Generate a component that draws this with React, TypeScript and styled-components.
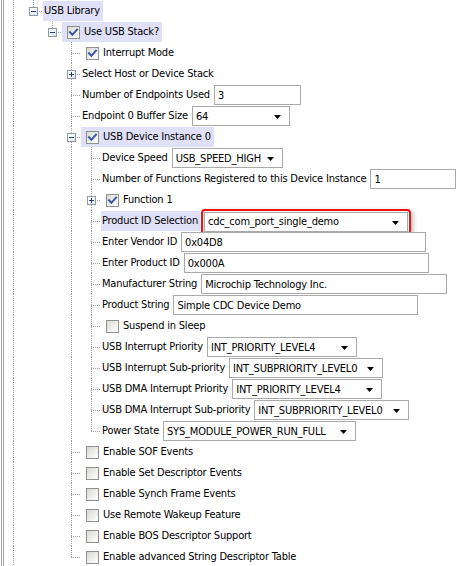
import React from 'react';
import styled, { createGlobalStyle, css } from 'styled-components';

const Global = createGlobalStyle`
  html, body { margin: 0; padding: 0; background: #ffffff; }
  body {
    font-family: "DejaVu Sans Condensed", "DejaVu Sans", Tahoma, sans-serif;
    font-size: 11px;
    letter-spacing: -0.2px;
    color: #000;
  }
`;

const LINE = '#a0a0a0';
const dotV = `repeating-linear-gradient(to bottom, ${LINE} 0 1px, transparent 1px 2px)`;
const dotH = `repeating-linear-gradient(to right, ${LINE} 0 1px, transparent 1px 2px)`;

const Frame = styled.div`
  margin-left: 1px;
  border-left: 3px double #a3a3a3;
  height: 566px;
  overflow: hidden;
  display: flex;
  flex-direction: column;
`;

const RowBox = styled.div`
  display: flex;
  flex: none;
  height: 21px;
  align-items: stretch;
`;

const Guide = styled.div<{ $w: number; $line: boolean }>`
  flex: none;
  width: ${(p) => p.$w}px;
  ${(p) =>
    p.$line &&
    css`
      background-image: ${dotV};
      background-size: 1px 100%;
      background-repeat: no-repeat;
      background-position: 9px 0;
    `}
`;

const Connector = styled.div<{ $last: boolean }>`
  flex: none;
  width: 19px;
  display: flex;
  align-items: flex-start;
  padding-left: 5px;
  box-sizing: border-box;
  background-image: ${dotV}, ${dotH};
  background-repeat: no-repeat;
  background-size: 1px ${(p) => (p.$last ? '12px' : '100%')}, 10px 1px;
  background-position: 9px 0, 9px 11px;
`;

const Expander = styled.div`
  margin-top: 7px;
  width: 9px;
  height: 9px;
  box-sizing: border-box;
  border: 1px solid #8a99ab;
  background: linear-gradient(135deg, #ffffff 30%, #dde2ea 100%);
  display: flex;
  align-items: center;
  justify-content: center;
`;

const Content = styled.div`
  display: flex;
  align-items: center;
  flex: none;
`;

const Block = styled.div<{ $hl?: boolean }>`
  display: flex;
  align-items: center;
  height: 20px;
  margin-top: 1px;
  padding-right: ${(p) => (p.$hl ? 3 : 0)}px;
  padding-left: 1px;
  background: ${(p) => (p.$hl ? '#e0e0f8' : 'transparent')};
`;

const CheckBox = styled.span`
  flex: none;
  width: 13px;
  height: 13px;
  box-sizing: border-box;
  margin-left: 4px;
  margin-right: 4px;
  border: 1px solid #8f9191;
  background: linear-gradient(135deg, #d8d8d4 0%, #f4f4f2 70%, #ffffff 100%);
  display: flex;
  align-items: center;
  justify-content: center;
`;

const Label = styled.span<{ $hl?: boolean }>`
  white-space: nowrap;
  line-height: 20px;
  ${(p) =>
    p.$hl &&
    css`
      background: #e0e0f8;
      padding: 0 2px 0 1px;
      margin-left: -1px;
    `}
`;

const FieldBox = styled.div<{ $w: number }>`
  flex: none;
  width: ${(p) => p.$w}px;
  height: 20px;
  box-sizing: border-box;
  border: 1px solid #aaaaaa;
  background: #ffffff;
  display: flex;
  align-items: center;
  justify-content: space-between;
  padding: 0 0 0 3px;
  white-space: nowrap;
  overflow: hidden;
`;

const FieldSlot = styled.div<{ $tight?: boolean }>`
  margin-left: ${(p) => (p.$tight ? 1 : 4)}px;
  margin-top: 1px;
  display: flex;
`;

const Callout = styled.div`
  margin: -2px 0 -3px 0;
  border: 2px solid #f01010;
  border-radius: 4px;
  padding: 1px;
  box-shadow: 2px 2px 5px rgba(0, 0, 0, 0.28);
  background: #ffffff;
  display: flex;
`;

const Arrow = styled.svg`
  flex: none;
  margin-right: 8px;
  margin-top: 2px;
`;

const Sign = ({ type }: { type: '+' | '-' }) => (
  <svg width="7" height="7" viewBox="0 0 7 7">
    <rect x="1" y="3" width="5" height="1" fill="#25408a" />
    {type === '+' && <rect x="3" y="1" width="1" height="5" fill="#25408a" />}
  </svg>
);

const Tick = () => (
  <svg width="11" height="11" viewBox="0 0 11 11">
    <path d="M2 5.2 L4.4 7.8 L9 2.6" fill="none" stroke="#3b57a8" strokeWidth="2" strokeLinecap="square" />
  </svg>
);

type Field = { kind: 'input' | 'select'; value: string; w: number; callout?: boolean };
type Row = {
  d: number;
  g: boolean[];
  last?: boolean;
  exp?: '+' | '-';
  check?: boolean;
  label: string;
  hl?: boolean;
  labelHl?: boolean;
  field?: Field;
};

const GUIDE_W = [20, 19, 19, 20];

const L3 = [true, false, false];
const L4 = [true, false, false, true];

const rows: Row[] = [
  { d: 1, g: [true], last: true, exp: '-', label: 'USB Library', hl: true },
  { d: 2, g: [true, false], last: true, exp: '-', check: true, label: 'Use USB Stack?', hl: true },
  { d: 3, g: L3, check: true, label: 'Interrupt Mode' },
  { d: 3, g: L3, exp: '+', label: 'Select Host or Device Stack' },
  { d: 3, g: L3, label: 'Number of Endpoints Used', field: { kind: 'input', value: '3', w: 87 } },
  { d: 3, g: L3, label: 'Endpoint 0 Buffer Size', field: { kind: 'select', value: '64', w: 98 } },
  { d: 3, g: L3, exp: '-', check: true, label: 'USB Device Instance 0', hl: true },
  { d: 4, g: L4, label: 'Device Speed', field: { kind: 'select', value: 'USB_SPEED_HIGH', w: 111 } },
  { d: 4, g: L4, label: 'Number of Functions Registered to this Device Instance', field: { kind: 'input', value: '1', w: 86 } },
  { d: 4, g: L4, exp: '+', check: true, label: 'Function 1' },
  { d: 4, g: L4, label: 'Product ID Selection', labelHl: true, field: { kind: 'select', value: 'cdc_com_port_single_demo', w: 204, callout: true } },
  { d: 4, g: L4, label: 'Enter Vendor ID', field: { kind: 'input', value: '0x04D8', w: 245 } },
  { d: 4, g: L4, label: 'Enter Product ID', field: { kind: 'input', value: '0x000A', w: 245 } },
  { d: 4, g: L4, label: 'Manufacturer String', field: { kind: 'input', value: 'Microchip Technology Inc.', w: 246 } },
  { d: 4, g: L4, label: 'Product String', field: { kind: 'input', value: 'Simple CDC Device Demo', w: 245 } },
  { d: 4, g: L4, check: false, label: 'Suspend in Sleep' },
  { d: 4, g: L4, label: 'USB Interrupt Priority', field: { kind: 'select', value: 'INT_PRIORITY_LEVEL4', w: 150 } },
  { d: 4, g: L4, label: 'USB Interrupt Sub-priority', field: { kind: 'select', value: 'INT_SUBPRIORITY_LEVEL0', w: 154 } },
  { d: 4, g: L4, label: 'USB DMA Interrupt Priority', field: { kind: 'select', value: 'INT_PRIORITY_LEVEL4', w: 150 } },
  { d: 4, g: L4, label: 'USB DMA Interrupt Sub-priority', field: { kind: 'select', value: 'INT_SUBPRIORITY_LEVEL0', w: 155 } },
  { d: 4, g: L4, last: true, label: 'Power State', field: { kind: 'select', value: 'SYS_MODULE_POWER_RUN_FULL', w: 193 } },
  { d: 3, g: L3, check: false, label: 'Enable SOF Events' },
  { d: 3, g: L3, check: false, label: 'Enable Set Descriptor Events' },
  { d: 3, g: L3, check: false, label: 'Enable Synch Frame Events' },
  { d: 3, g: L3, check: false, label: 'Use Remote Wakeup Feature' },
  { d: 3, g: L3, check: false, label: 'Enable BOS Descriptor Support' },
  { d: 3, g: L3, last: true, check: false, label: 'Enable advanced String Descriptor Table' },
];

const FieldView = ({ f }: { f: Field }) => {
  const box = (
    <FieldBox $w={f.w}>
      <span>{f.value}</span>
      {f.kind === 'select' && (
        <Arrow width="7" height="4" viewBox="0 0 7 4">
          <polygon points="0,0 7,0 3.5,4" fill="#000" />
        </Arrow>
      )}
    </FieldBox>
  );
  return <FieldSlot $tight={f.callout}>{f.callout ? <Callout>{box}</Callout> : box}</FieldSlot>;
};

const TreeRow = ({ r }: { r: Row }) => (
  <RowBox>
    {r.g.map((line, i) => (
      <Guide key={i} $w={GUIDE_W[i]} $line={line} />
    ))}
    <Connector $last={!!r.last}>{r.exp && <Expander><Sign type={r.exp} /></Expander>}</Connector>
    <Content>
      <Block $hl={r.hl}>
        {r.check !== undefined && <CheckBox>{r.check && <Tick />}</CheckBox>}
        <Label $hl={r.labelHl}>{r.label}</Label>
      </Block>
      {r.field && <FieldView f={r.field} />}
    </Content>
  </RowBox>
);

export default function App() {
  return (
    <>
      <Global />
      <Frame>
        {rows.map((r, i) => (
          <TreeRow key={i} r={r} />
        ))}
      </Frame>
    </>
  );
}
